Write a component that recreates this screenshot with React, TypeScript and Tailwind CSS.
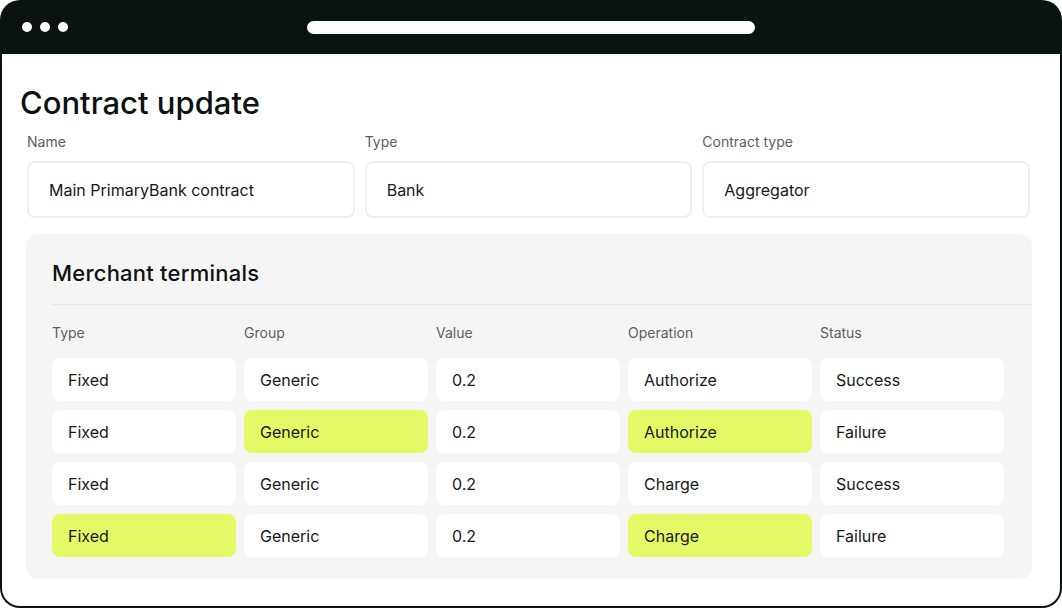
const FONT = "font-['Inter','Noto_Sans',sans-serif]";

type Cell = { text: string; hl?: boolean };

const headers = ["Type", "Group", "Value", "Operation", "Status"];

const rows: Cell[][] = [
  [{ text: "Fixed" }, { text: "Generic" }, { text: "0.2" }, { text: "Authorize" }, { text: "Success" }],
  [{ text: "Fixed" }, { text: "Generic", hl: true }, { text: "0.2" }, { text: "Authorize", hl: true }, { text: "Failure" }],
  [{ text: "Fixed" }, { text: "Generic" }, { text: "0.2" }, { text: "Charge" }, { text: "Success" }],
  [{ text: "Fixed", hl: true }, { text: "Generic" }, { text: "0.2" }, { text: "Charge", hl: true }, { text: "Failure" }],
];

const fields = [
  { label: "Name", value: "Main PrimaryBank contract" },
  { label: "Type", value: "Bank" },
  { label: "Contract type", value: "Aggregator" },
];

export default function App() {
  return (
    <div className={`w-[1062px] h-[610px] bg-white ${FONT}`}>
      <div className="h-[608px] rounded-[20px] bg-[#0a1311] px-[2px] pb-[2px] flex flex-col overflow-hidden">
        {/* browser chrome */}
        <div className="h-[54px] shrink-0 grid grid-cols-[1fr_448px_1fr] items-center">
          <div className="flex items-center gap-[8px] pl-[20px]">
            <span className="w-[10px] h-[10px] rounded-full bg-white" />
            <span className="w-[10px] h-[10px] rounded-full bg-white" />
            <span className="w-[10px] h-[10px] rounded-full bg-white" />
          </div>
          <div className="h-[13px] rounded-full bg-white" />
          <div />
        </div>

        {/* page */}
        <div className="flex-1 bg-white rounded-b-[18px] pt-[31px] px-[18px]">
          <h1 className="text-[31px] leading-[36px] font-medium text-[#0d1110]">
            Contract update
          </h1>

          <div className="grid grid-cols-3 gap-[10px] mt-[11px] ml-[7px] mr-[12px]">
            {fields.map((f) => (
              <div key={f.label}>
                <div className="text-[14px] leading-[20px] text-[#5b5f5e]">{f.label}</div>
                <div className="mt-[9px] h-[57px] rounded-[8px] border-2 border-[#efefef] flex items-center pl-[20px] text-[16px] text-[#151918]">
                  {f.value}
                </div>
              </div>
            ))}
          </div>

          <div className="mt-[16px] ml-[6px] mr-[10px] rounded-[12px] bg-[#f5f5f5] pt-[25px] pl-[26px] pb-[22px]">
            <h2 className="text-[22px] leading-[28px] font-medium tracking-[0.01em] text-[#0d1110]">
              Merchant terminals
            </h2>
            <div className="mt-[17px] h-px bg-[#e6e6e6]" />

            <div className="w-[952px] grid grid-cols-5 gap-x-[8px] mt-[18px]">
              {headers.map((h) => (
                <div key={h} className="text-[14px] leading-[20px] text-[#5b5f5e]">
                  {h}
                </div>
              ))}
            </div>

            <div className="w-[952px] mt-[15px] flex flex-col gap-[9px]">
              {rows.map((r, i) => (
                <div key={i} className="grid grid-cols-5 gap-x-[8px]">
                  {r.map((c, j) => (
                    <div
                      key={j}
                      className={`h-[43px] rounded-[8px] flex items-center pl-[16px] text-[16px] text-[#151918] ${
                        c.hl ? "bg-[#e5f966]" : "bg-white"
                      }`}
                    >
                      {c.text}
                    </div>
                  ))}
                </div>
              ))}
            </div>
          </div>
        </div>
      </div>
    </div>
  );
}
